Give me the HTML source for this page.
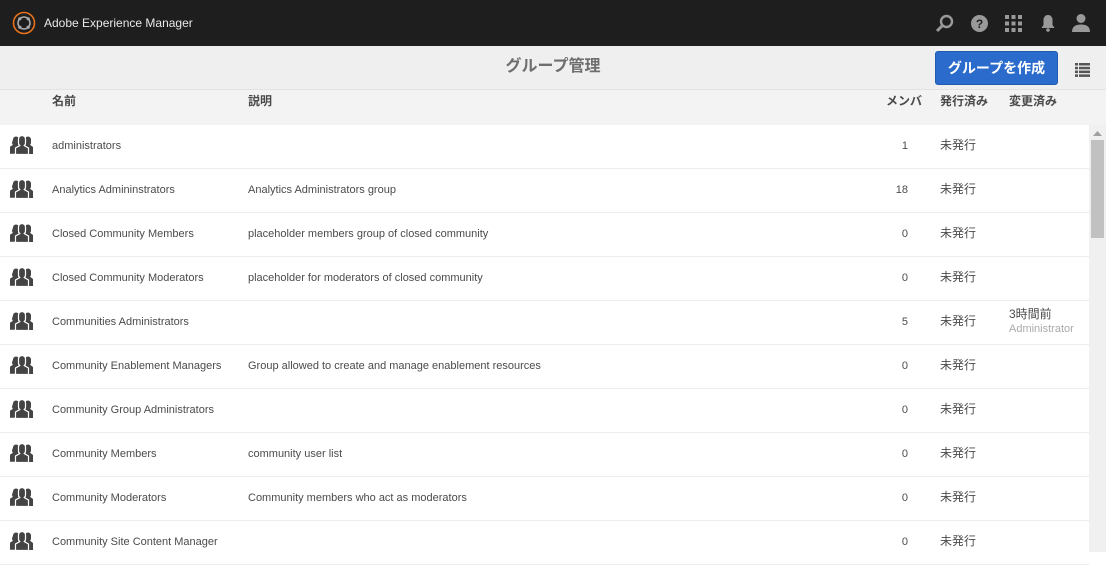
<!DOCTYPE html>
<html><head><meta charset="utf-8"><style>
*{margin:0;padding:0;box-sizing:border-box}
body{width:1106px;height:552px;overflow:hidden;font-family:"Liberation Sans","Noto Sans CJK JP",sans-serif;background:#fff;color:#4b4b4b;position:relative}
.top{position:absolute;left:0;top:0;width:1106px;height:46px;background:#1e1e1e}
.top .t{position:absolute;left:44px;top:16px;color:#e8e8e8;font-size:12px}
.tb{position:absolute;left:0;top:46px;width:1106px;height:44px;background:#efefef;border-bottom:1px solid #e2e2e2}
.title{position:absolute;left:0;width:1106px;top:10px;text-align:center;font-size:16px;line-height:22px;font-weight:bold;color:#6e6e6e}
.btn{position:absolute;left:935px;top:5px;width:123px;height:34px;background:#2b6bcb;border:1px solid #1f5bb0;border-radius:3px;color:#fff;font-weight:bold;font-size:14px;text-align:center;line-height:32px}
.hd{position:absolute;left:0;top:90px;width:1106px;height:35px;background:#f3f3f3;font-size:12px;font-weight:bold;color:#4b4b4b}
.hd span,.row span{position:absolute;line-height:16px}
.row{position:absolute;left:0;width:1089px;height:44px;border-bottom:1px solid #ececec;font-size:11px;color:#4b4b4b}
.row span{top:13px}
.row span.j{font-size:12px}
.sb{position:absolute;left:1089px;top:125px;width:17px;height:427px;background:#f0f0f0}
.ic{position:absolute;left:10px;top:11px}
</style></head><body>
<div class="top">
<svg style="position:absolute;left:12px;top:11px" width="24" height="24" viewBox="0 0 24 24"><circle cx="12" cy="12" r="10.5" fill="none" stroke="#e8711c" stroke-width="1.6"/><circle cx="12" cy="12" r="6" fill="none" stroke="#aaa" stroke-width="1.6"/><circle cx="7.8" cy="7.8" r="1.6" fill="#aaa"/><circle cx="16.2" cy="7.8" r="1.6" fill="#aaa"/><circle cx="7.8" cy="16.2" r="1.6" fill="#aaa"/><circle cx="16.2" cy="16.2" r="1.6" fill="#aaa"/></svg>
<div class="t">Adobe Experience Manager</div>
<svg style="position:absolute;left:935px;top:14px" width="20" height="20" viewBox="0 0 20 20"><circle cx="11.5" cy="7.5" r="5.5" fill="none" stroke="#999" stroke-width="2.4"/><path d="M7.5 11.5L2 17" stroke="#999" stroke-width="3"/></svg>
<svg style="position:absolute;left:970px;top:14px" width="19" height="19" viewBox="0 0 19 19"><circle cx="9.5" cy="9.5" r="8.5" fill="#999"/><text x="9.5" y="14" font-size="12" font-weight="bold" text-anchor="middle" fill="#1e1e1e" font-family="Liberation Sans">?</text></svg>
<svg style="position:absolute;left:1005px;top:15px" width="17" height="17" viewBox="0 0 17 17" fill="#999"><rect x="0" y="0" width="4" height="4"/><rect x="6.5" y="0" width="4" height="4"/><rect x="13" y="0" width="4" height="4"/><rect x="0" y="6.5" width="4" height="4"/><rect x="6.5" y="6.5" width="4" height="4"/><rect x="13" y="6.5" width="4" height="4"/><rect x="0" y="13" width="4" height="4"/><rect x="6.5" y="13" width="4" height="4"/><rect x="13" y="13" width="4" height="4"/></svg>
<svg style="position:absolute;left:1040px;top:14px" width="16" height="18" viewBox="0 0 16 18" fill="#999"><path d="M8 1c-3 0-4.5 2.5-4.5 5v5L1.5 14h13l-2-3V6c0-2.5-1.5-5-4.5-5z"/><circle cx="8" cy="16" r="1.8"/></svg>
<svg style="position:absolute;left:1072px;top:13px" width="18" height="19" viewBox="0 0 18 19" fill="#999"><circle cx="9" cy="5.5" r="4.5"/><path d="M0 19c0-5 3-7.5 9-7.5s9 2.5 9 7.5z"/></svg>
</div>
<div class="tb"><div class="title">グループ管理</div><div class="btn">グループを作成</div>
<svg style="position:absolute;left:1075px;top:17px" width="15" height="14" viewBox="0 0 15 14" fill="#555"><rect x="0" y="0" width="3" height="2.5"/><rect x="4" y="0" width="11" height="2.5"/><rect x="0" y="3.8" width="3" height="2.5"/><rect x="4" y="3.8" width="11" height="2.5"/><rect x="0" y="7.6" width="3" height="2.5"/><rect x="4" y="7.6" width="11" height="2.5"/><rect x="0" y="11.4" width="3" height="2.5"/><rect x="4" y="11.4" width="11" height="2.5"/></svg>
</div>
<div class="hd"><span style="left:52px;top:3px">名前</span><span style="left:248px;top:3px">説明</span><span style="left:886px;top:3px">メンバ</span><span style="left:940px;top:3px">発行済み</span><span style="left:1009px;top:3px">変更済み</span></div>
<div id="rows"></div>
<div class="sb"><svg style="position:absolute;left:4px;top:5px" width="9" height="6"><path d="M0 6L4.5 1 9 6z" fill="#a0a0a0"/></svg><div style="left:2px;top:15px;position:absolute;width:13px;height:98px;background:#c1c1c1"></div></div>
<script>
var d=[["administrators","","1"],["Analytics Admininstrators","Analytics Administrators group","18"],["Closed Community Members","placeholder members group of closed community","0"],["Closed Community Moderators","placeholder for moderators of closed community","0"],["Communities Administrators","","5"],["Community Enablement Managers","Group allowed to create and manage enablement resources","0"],["Community Group Administrators","","0"],["Community Members","community user list","0"],["Community Moderators","Community members who act as moderators","0"],["Community Site Content Manager","","0"]];
var ic='<svg class="ic" width="24" height="20" viewBox="0 0 24 20" fill="#444"><path d="M3 3.5a3 3 0 016 0v3a3 3 0 01-1 2.3l3 2v7H0v-7l3-2a3 3 0 01-1-2.3z"/><path d="M15 3.5a3 3 0 016 0v3a3 3 0 01-1 2.3l3 2.2v7H13v-7l3-2.2a3 3 0 01-1-2.3z"/><path d="M8.5 3a3.5 3.5 0 017 0v4a3.5 3.5 0 01-1.2 2.6L18.5 12v6.5h-13V12l4.2-2.4a3.5 3.5 0 01-1.2-2.6z" stroke="#fff" stroke-width="1.2"/></svg>';
var h='';d.forEach(function(r,i){h+='<div class="row" style="top:'+(125+i*44)+'px">'+ic+'<span style="left:52px">'+r[0]+'</span><span style="left:248px">'+r[1]+'</span><span style="right:'+(1089-908)+'px">'+r[2]+'</span><span class="j" style="left:940px;top:12px">未発行</span>'+(i==4?'<span class="j" style="left:1009px;top:5px">3時間前</span><span style="left:1009px;top:20px;color:#aaa;font-size:11px">Administrator</span>':'')+'</div>'});
document.getElementById('rows').innerHTML=h;
</script>
</body></html>
